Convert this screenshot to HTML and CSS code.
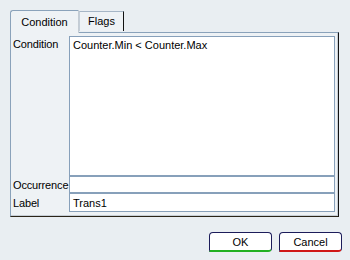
FILE: index.html
```html
<!DOCTYPE html>
<html lang="en">
<head>
    <meta charset="utf-8">
    <title>Transition</title>
    <link rel="stylesheet" href="styles.css">
</head>
<body>
<div class="dialog">
    <div class="tabs">
        <div class="tab active">Condition</div>
        <div class="tab">Flags</div>
    </div>
    <div class="panel">
        <div class="row">
            <div class="label top">Condition</div>
            <div class="field area">Counter.Min &lt; Counter.Max</div>
        </div>
        <div class="row">
            <div class="label">Occurrence</div>
            <div class="field occ"></div>
        </div>
        <div class="row">
            <div class="label">Label</div>
            <div class="field name">Trans1</div>
        </div>
    </div>
    <div class="buttons">
        <button class="btn ok">OK</button>
        <button class="btn cancel">Cancel</button>
    </div>
</div>
</body>
</html>
```

FILE: styles.css
```css
* {
    box-sizing: border-box;
}
body {
    margin: 0;
    background-color: #e9eef2;
    font-family: 'Liberation Sans', Arial, sans-serif;
    font-size: 11px;
    color: #000;
}
.dialog {
    width: 350px;
    height: 260px;
    padding: 10px 11px 0 10px;
}
.tabs {
    display: flex;
    align-items: flex-end;
    height: 22px;
}
.tab {
    height: 20px;
    width: 45px;
    text-align: center;
    line-height: 18px;
    border-top: 1px solid #a6b6c6;
    border-left: 1px solid #c4ced8;
    border-right: 1px solid #111;
    background-color: #eef2f5;
    margin-bottom: 1px;
}
.tab.active {
    position: relative;
    height: 23px;
    width: 69px;
    margin-bottom: -1px;
    padding-top: 2px;
    border-top: 1px solid #8aa2ba;
    border-left: 1px solid #8aa2ba;
    border-right: 1px solid #c4ccd4;
    border-radius: 3px 0 0 0;
    z-index: 1;
}
.panel {
    height: 185px;
    border-top: 1px solid #8aa2ba;
    border-left: 1px solid #8aa2ba;
    border-right: 1px solid #111;
    border-bottom: 1px solid #2a2418;
    background-color: #eef2f5;
    box-shadow: inset -1px -1px 0 #c6ced6;
    padding: 3px 3px 4px 0;
}
.row {
    display: flex;
}
.label {
    width: 58px;
    padding-left: 2px;
    display: flex;
    align-items: center;
    white-space: nowrap;
    letter-spacing: -0.15px;
}
.label.top {
    align-items: flex-start;
    padding-top: 2px;
}
.field {
    flex: 1;
    background-color: #fff;
    border: 1px solid #87a0ba;
    padding: 0 3px;
    display: flex;
    align-items: center;
}
.field.area {
    height: 140px;
    align-items: flex-start;
    padding-top: 2px;
}
.field.occ {
    height: 17px;
}
.field.name {
    height: 19px;
}
.buttons {
    display: flex;
    justify-content: flex-end;
    gap: 7px;
    margin-top: 15px;
    margin-right: -3px;
}
.btn {
    width: 63px;
    height: 20px;
    background-color: #fff;
    border: 1px solid #1c1c5a;
    border-radius: 4px 4px 4px 0;
    font-family: 'Liberation Sans', Arial, sans-serif;
    font-size: 11px;
    color: #000;
    padding: 0;
}
.btn.ok {
    border-bottom: 2px solid #22b022;
}
.btn.cancel {
    border-bottom: 2px solid #d01818;
}
```
